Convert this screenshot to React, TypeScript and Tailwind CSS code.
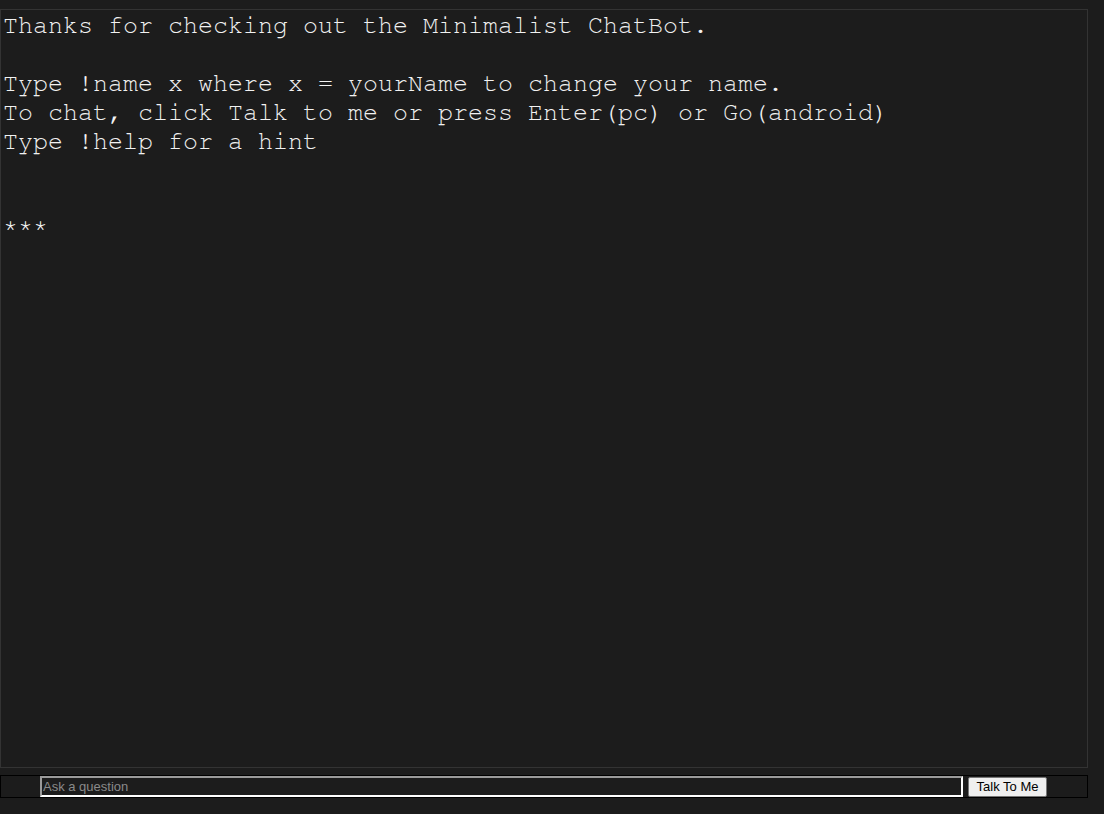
import { useState } from "react";

export default function App() {
  const [question, setQuestion] = useState("");

  const lines = [
    "Thanks for checking out the Minimalist ChatBot.",
    "",
    "Type !name x where x = yourName to change your name.",
    "To chat, click Talk to me or press Enter(pc) or Go(android)",
    "Type !help for a hint",
    "",
    "",
    "***",
  ];

  return (
    <div className="h-[814px] bg-[#1c1c1c] pt-[9px]">
      <div
        className="w-[1088px] h-[759px] border border-[#333333] pl-[2px] pt-[1px] text-[#f2f2f2] text-[25px] leading-[29px] whitespace-pre overflow-hidden"
        style={{ fontFamily: '"Nimbus Mono PS", "FreeMono", "Liberation Mono", "Courier New", monospace' }}
      >
        {lines.map((l, i) => (
          <div key={i} className="h-[29px]">{l}</div>
        ))}
      </div>
      <form
        onSubmit={(e) => e.preventDefault()}
        className="mt-[7px] w-[1088px] h-[23px] border border-black flex items-center pl-[39px]"
        style={{ fontFamily: '"Liberation Sans", Arial, sans-serif' }}
      >
        <input
          type="text"
          value={question}
          onChange={(e) => setQuestion(e.target.value)}
          placeholder="Ask a question"
          className="w-[923px] h-[21px] bg-[#1c1c1c] text-[13px] text-white px-[1px] border-2 border-t-[#9a9a9a] border-l-[#9a9a9a] border-b-white border-r-white placeholder:text-[#8a8a8a] outline-none"
        />
        <button
          type="submit"
          className="ml-[5px] w-[79px] h-[20px] bg-[#efefef] border border-[#767676] rounded-[2px] text-[13px] text-black leading-none"
        >
          Talk To Me
        </button>
      </form>
    </div>
  );
}
